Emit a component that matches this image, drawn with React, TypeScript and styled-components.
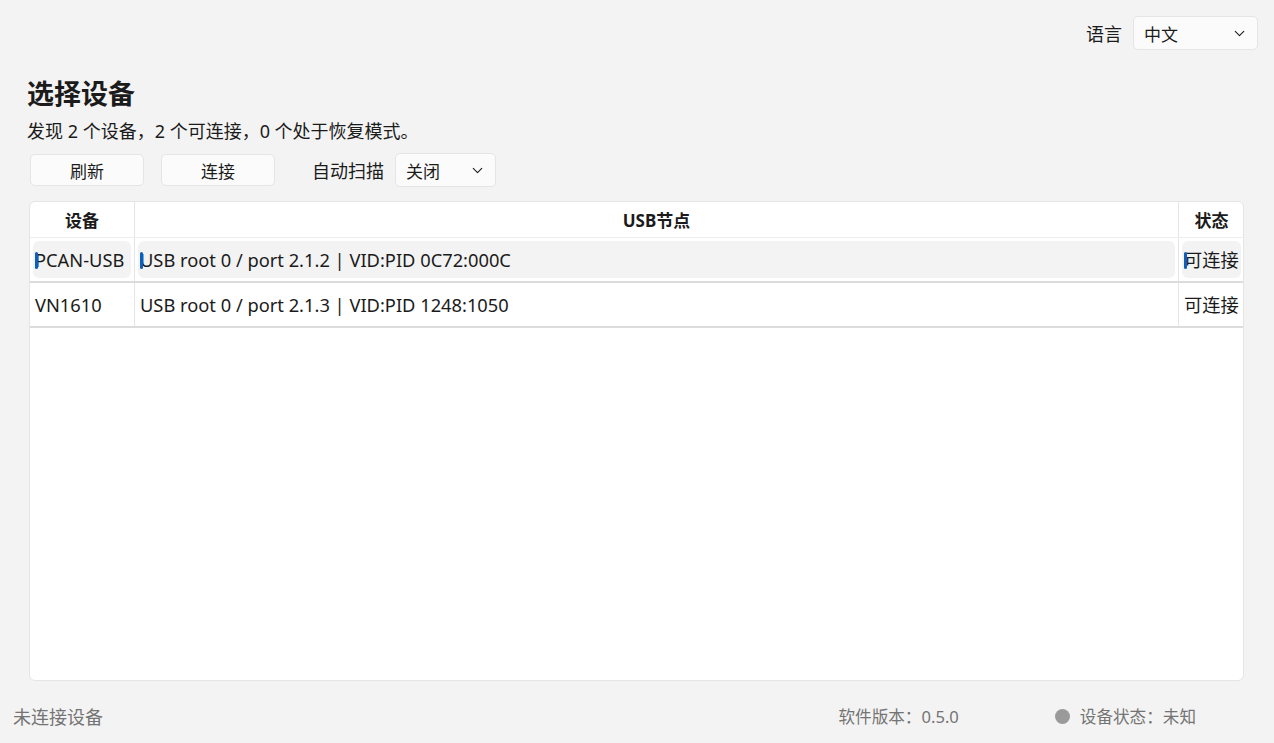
import React from 'react';
import styled, { createGlobalStyle } from 'styled-components';
import { ChevronDown } from 'lucide-react';

const GlobalStyle = createGlobalStyle`
    html, body {
        margin: 0;
        padding: 0;
        background: #f3f3f3;
    }
    body {
        font-family: "Noto Sans", "Noto Sans CJK SC", sans-serif;
        color: #1b1b1b;
    }
`;

const Page = styled.div`
    height: 743px;
    display: flex;
    flex-direction: column;
    box-sizing: border-box;
`;

const TopBar = styled.div`
    display: flex;
    justify-content: flex-end;
    align-items: center;
    gap: 11px;
    padding: 16px 16px 0 0;
`;

const Label = styled.span`
    font-size: 18px;
`;

const Select = styled.div<{ $width: number }>`
    width: ${(p) => p.$width}px;
    height: 34px;
    box-sizing: border-box;
    display: flex;
    align-items: center;
    justify-content: space-between;
    padding: 0 9px 0 10px;
    background: #fbfbfb;
    border: 1px solid #e5e5e5;
    border-radius: 5px;
    font-size: 17px;
`;

const Content = styled.div`
    flex: 1;
    display: flex;
    flex-direction: column;
    padding: 27px 30px 0 27px;
    min-height: 0;
`;

const Title = styled.h1`
    font-size: 27px;
    font-weight: bold;
    margin: 0;
    line-height: 34px;
`;

const SubHeading = styled.p`
    font-size: 18px;
    margin: 8px 0 0 0;
    line-height: 24px;
`;

const Toolbar = styled.div`
    display: flex;
    align-items: center;
    margin: 10px 0 14px 3px;
`;

const Button = styled.button`
    width: 114px;
    height: 32px;
    margin-right: 17px;
    background: #fbfbfb;
    border: 1px solid #e5e5e5;
    border-radius: 5px;
    font-family: inherit;
    font-size: 17px;
    color: #1b1b1b;
`;

const ScanLabel = styled(Label)`
    margin: 0 11px 0 20px;
`;

const Card = styled.div`
    flex: 1;
    margin-left: 2px;
    background: #ffffff;
    border: 1px solid #e5e5e5;
    border-radius: 6px;
    overflow: hidden;
`;

const Row = styled.div<{ $header?: boolean }>`
    display: grid;
    grid-template-columns: 105px 1fr 65px;
    width: 1214px;
    height: ${(p) => (p.$header ? 35 : 43)}px;
    border-bottom: ${(p) => (p.$header ? '1px solid #ededed' : '2px solid #dcdcdc')};
    border-right: ${(p) => (p.$header ? 'none' : '2px solid #dcdcdc')};
    box-sizing: content-box;
`;

const HeadCell = styled.div<{ $last?: boolean }>`
    display: flex;
    align-items: center;
    justify-content: center;
    font-weight: bold;
    font-size: 17px;
    border-right: ${(p) => (p.$last ? 'none' : '1px solid #e5e5e5')};
`;

const Cell = styled.div<{ $last?: boolean }>`
    display: flex;
    align-items: center;
    padding: 3px;
    border-right: ${(p) => (p.$last ? 'none' : '1px solid #e5e5e5')};
    min-width: 0;
`;

const CellInner = styled.div<{ $selected?: boolean }>`
    position: relative;
    flex: 1;
    height: 100%;
    display: flex;
    align-items: center;
    padding-left: 2px;
    padding-bottom: 1px;
    box-sizing: border-box;
    border-radius: 6px;
    background: ${(p) => (p.$selected ? '#f3f3f3' : 'transparent')};
    font-size: 18.3px;
    white-space: nowrap;

    &::before {
        content: '';
        display: ${(p) => (p.$selected ? 'block' : 'none')};
        position: absolute;
        left: 2px;
        top: 50%;
        width: 3px;
        height: 17px;
        margin-top: -8px;
        border-radius: 2px;
        background: #0f5fb8;
    }
`;

const Footer = styled.div`
    height: 62px;
    box-sizing: border-box;
    padding: 8px 0 0 13px;
    display: flex;
    align-items: center;
    font-size: 16.6px;
    color: #747474;
`;

const Hint = styled.span`
    font-size: 18px;
`;

const FooterGrow = styled.div`
    flex: 1;
`;

const Version = styled.span`
    margin-right: 96px;
`;

const Status = styled.span`
    display: flex;
    align-items: center;
    gap: 10px;
    margin-right: 78px;
`;

const Dot = styled.span`
    width: 15px;
    height: 15px;
    border-radius: 50%;
    background: #9a9a9a;
`;

const devices = [
    { name: 'PCAN-USB', node: 'USB root 0 / port 2.1.2 | VID:PID 0C72:000C', state: '可连接', selected: true },
    { name: 'VN1610', node: 'USB root 0 / port 2.1.3 | VID:PID 1248:1050', state: '可连接', selected: false },
];

function App() {
    return (
        <Page>
            <GlobalStyle />
            <TopBar>
                <Label>语言</Label>
                <Select $width={125}>
                    中文
                    <ChevronDown size={17} strokeWidth={1.5} />
                </Select>
            </TopBar>
            <Content>
                <Title>选择设备</Title>
                <SubHeading>发现 2 个设备，2 个可连接，0 个处于恢复模式。</SubHeading>
                <Toolbar>
                    <Button>刷新</Button>
                    <Button>连接</Button>
                    <ScanLabel>自动扫描</ScanLabel>
                    <Select $width={101}>
                        关闭
                        <ChevronDown size={17} strokeWidth={1.5} />
                    </Select>
                </Toolbar>
                <Card>
                    <Row $header>
                        <HeadCell>设备</HeadCell>
                        <HeadCell>USB节点</HeadCell>
                        <HeadCell $last>状态</HeadCell>
                    </Row>
                    {devices.map((d) => (
                        <Row key={d.name}>
                            <Cell><CellInner $selected={d.selected}>{d.name}</CellInner></Cell>
                            <Cell><CellInner $selected={d.selected}>{d.node}</CellInner></Cell>
                            <Cell $last><CellInner $selected={d.selected}>{d.state}</CellInner></Cell>
                        </Row>
                    ))}
                </Card>
            </Content>
            <Footer>
                <Hint>未连接设备</Hint>
                <FooterGrow />
                <Version>软件版本：0.5.0</Version>
                <Status>
                    <Dot />
                    设备状态：未知
                </Status>
            </Footer>
        </Page>
    );
}

export default App;
